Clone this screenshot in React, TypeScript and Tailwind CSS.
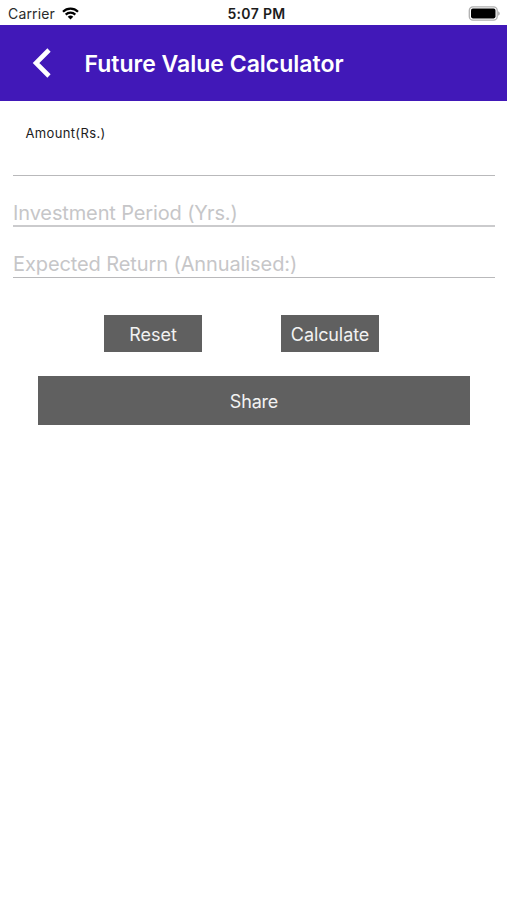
import type { ReactNode } from "react";

export default function App() {
  return (
    <div className="flex h-[900px] w-[507px] flex-col overflow-hidden bg-white font-['Inter',sans-serif]">
      <StatusBar />
      <Header title="Future Value Calculator" />
      <main className="flex flex-col pr-3 pl-[13px]">
        <label className="mt-6 ml-[12.5px] h-[17px] text-[13px] leading-4 tracking-[0.35px] whitespace-nowrap text-[#1c1c1c]">
          Amount(Rs.)
        </label>
        <div className="h-[34px] border-b border-[#b9b9bb]" />
        <Field className="border-b-2 border-[#cbcbcd] leading-6">
          <span className="tracking-[-0.13px]">Investment Period (Yrs.)</span>
        </Field>
        <Field className="border-b border-[#b9b9bb] leading-[25px]">
          <span className="tracking-[-0.1px]">Expected Return (Annualised:)</span>
        </Field>

        <div className="mt-[37px] ml-[91px] flex gap-[79px]">
          <Button className="h-[37px] w-[98px]">Reset</Button>
          <Button className="h-[37px] w-[98px] tracking-[-0.1px]">
            Calculate
          </Button>
        </div>
        <Button className="mt-6 ml-[25px] h-[49px] w-[432px] tracking-[-0.2px]">
          Share
        </Button>
      </main>
    </div>
  );
}

function StatusBar() {
  return (
    <div className="flex h-[25px] shrink-0 items-center justify-between pt-0.5 pr-[7px] pl-2 text-black">
      <div className="flex w-40 items-center gap-[7px]">
        <span className="text-sm tracking-[0.15px] text-[#2b2b2b]">
          Carrier
        </span>
        <WifiIcon />
      </div>
      <span className="ml-[5px] text-sm font-semibold tracking-[0.35px] whitespace-nowrap text-[#1c1c1c]">
        5:07 PM
      </span>
      <div className="flex w-40 justify-end">
        <BatteryIcon />
      </div>
    </div>
  );
}

function Header({ title }: { title: string }) {
  return (
    <header className="flex h-[76px] shrink-0 items-center bg-[#4118b8] pl-[32px] text-white">
      <button aria-label="Back">
        <svg width="20" height="30" viewBox="0 0 20 30" fill="none">
          <path d="M17 2 4 15l13 13" stroke="currentColor" strokeWidth="4.6" />
        </svg>
      </button>
      <h1 className="ml-[32.5px] pt-0.5 text-[23px] font-semibold whitespace-nowrap">
        {title}
      </h1>
    </header>
  );
}

function Field({
  children,
  className,
}: {
  children: ReactNode;
  className: string;
}) {
  return (
    <div
      className={`flex h-[51px] items-end text-xl whitespace-nowrap text-[#c6c6c8] ${className}`}
    >
      {children}
    </div>
  );
}

function Button({
  children,
  className,
}: {
  children: string;
  className: string;
}) {
  return (
    <button
      className={`flex items-center justify-center bg-[#606060] pt-0.5 text-lg text-[#f2f2f2] ${className}`}
    >
      {children}
    </button>
  );
}

function WifiIcon() {
  return (
    <svg width="17" height="13" viewBox="0 0 17 13" fill="none">
      <path
        d="M1 4.7a10.7 10.7 0 0 1 15 0M3.7 7.6a6.9 6.9 0 0 1 9.6 0"
        stroke="currentColor"
        strokeWidth="2.2"
      />
      <path d="M5.7 9.7a4.1 4.1 0 0 1 5.6 0L8.5 12.5z" fill="currentColor" />
    </svg>
  );
}

function BatteryIcon() {
  return (
    <svg width="32" height="15" viewBox="0 0 32 15">
      <rect
        x="1.3"
        y="0.8"
        width="27.9"
        height="13.4"
        rx="3.6"
        fill="#fff"
        stroke="#b0b0b0"
        strokeWidth="1.3"
      />
      <rect x="3" y="2.6" width="24.5" height="9.8" rx="1.8" fill="#000" />
      <path d="M30.2 5.2c2 1 2 3.6 0 4.6z" fill="#a5a5a5" />
    </svg>
  );
}
